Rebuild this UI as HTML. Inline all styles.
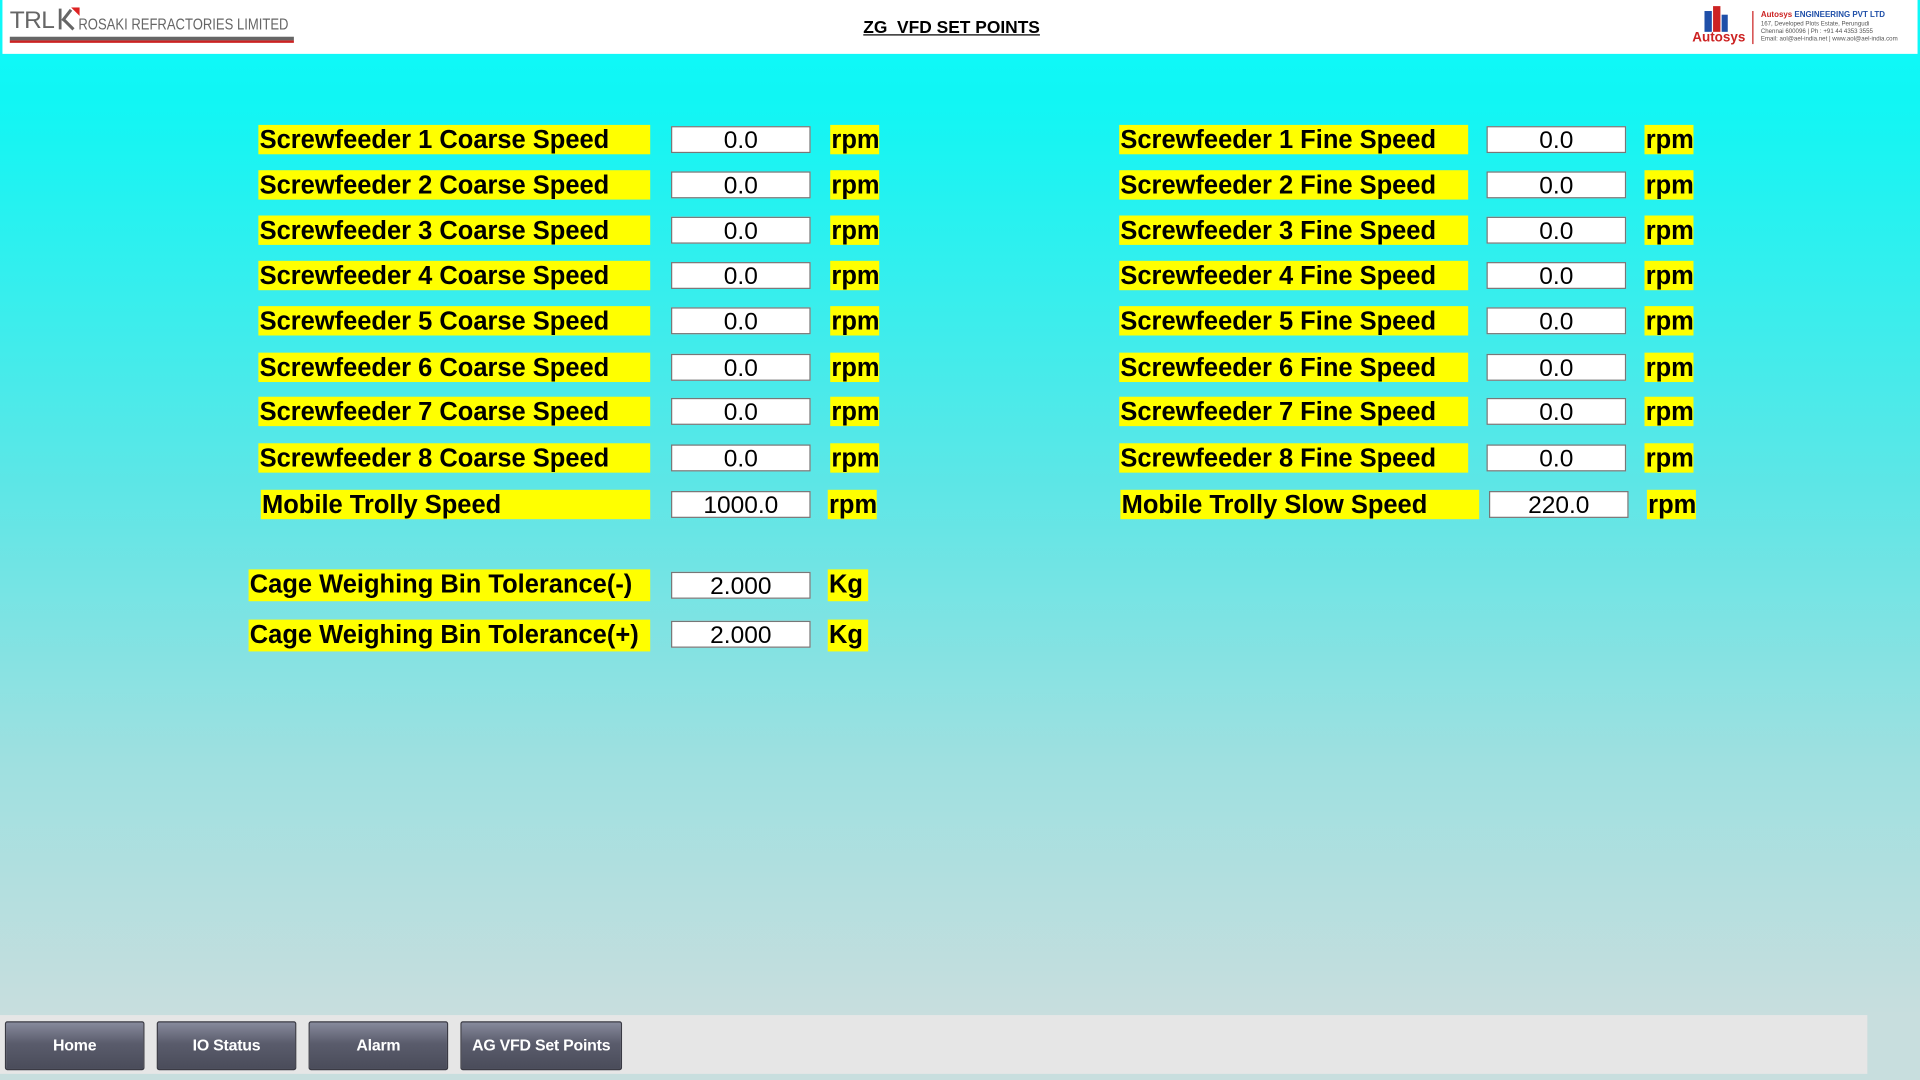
<!DOCTYPE html>
<html><head><meta charset="utf-8"><style>
html,body{margin:0;padding:0;width:1920px;height:1080px;overflow:hidden}
#w{position:absolute;left:0;top:0;width:1568px;height:882px;transform:scale(1.22449);transform-origin:0 0;
background:linear-gradient(#0ff8f8 45px,#10f6f4 80px,#5ee6e6 400px,#9ee0e0 620px,#c8dede 830px);font-family:"Liberation Sans",Arial,sans-serif}
.a{position:absolute}
.hdr{left:2px;top:0;width:1564px;height:44px;background:#fff}
.l{position:absolute;background:#ff0;font-weight:bold;font-size:20.8px;color:#000;height:24px;line-height:25px;white-space:nowrap;padding-left:1px;box-sizing:border-box}
.i{position:absolute;background:#fff;border:1px solid #777;height:22px;box-sizing:border-box;text-align:center;font-size:20px;line-height:22px;color:#000}
.b{position:absolute;top:834px;height:40px;background:linear-gradient(#878a9c,#5a5c6c 45%,#4a4c5a);border:1px solid #3a3a44;border-radius:2px;box-sizing:border-box;color:#fff;font-weight:bold;font-size:13px;text-align:center;line-height:38px;letter-spacing:-0.2px}
</style></head><body><div id="w">
<div class="a hdr"></div>
<div class="a" style="left:8px;top:6px;font-size:20px;color:#666;letter-spacing:-0.5px">TRL</div>
<svg class="a" style="left:48px;top:6px" width="18" height="19" viewBox="0 0 18 19"><path d="M1 1V18M3 11L10 2M4 10L12 18" stroke="#666" stroke-width="2.5" fill="none"/><path d="M10 0H17V7Z" fill="#d22"/></svg>
<div class="a" style="left:64px;top:12px;font-size:13px;color:#666;white-space:nowrap;transform:scaleX(0.82);transform-origin:0 0">ROSAKI REFRACTORIES LIMITED</div>
<div class="a" style="left:8px;top:30px;width:232px;height:3px;background:#666"></div>
<div class="a" style="left:8px;top:33px;width:232px;height:2px;background:#c22"></div>
<div class="a" style="left:705px;top:15px;font-size:14.2px;font-weight:bold;text-decoration:underline">ZG&nbsp; VFD SET POINTS</div>
<div class="a" style="left:1392px;top:9px;width:6px;height:17px;background:#1f4fa8"></div>
<div class="a" style="left:1399px;top:5px;width:6px;height:21px;background:#c22"></div>
<div class="a" style="left:1406px;top:12px;width:5px;height:14px;background:#1f4fa8"></div>
<div class="a" style="left:1382px;top:25px;font-size:11px;font-weight:bold;color:#c22">Autosys</div>
<div class="a" style="left:1431px;top:9px;width:1px;height:27px;background:#c22"></div>
<div class="a" style="left:1438px;top:9px;font-size:6.5px;font-weight:bold;color:#c22;white-space:nowrap">Autosys <span style="color:#1f4fa8">ENGINEERING PVT LTD</span></div>
<div class="a" style="left:1438px;top:17px;font-size:5px;color:#555;line-height:6px;white-space:nowrap">167, Developed Plots Estate, Perungudi<br>Chennai 600096 | Ph : +91 44 4353 3555<br>Email: aol@ael-india.net | www.aol@ael-india.com</div>

<div class="l" style="left:211px;top:102px;width:320px">Screwfeeder 1 Coarse Speed</div>
<div class="l" style="left:211px;top:139px;width:320px">Screwfeeder 2 Coarse Speed</div>
<div class="l" style="left:211px;top:176px;width:320px">Screwfeeder 3 Coarse Speed</div>
<div class="l" style="left:211px;top:213px;width:320px">Screwfeeder 4 Coarse Speed</div>
<div class="l" style="left:211px;top:250px;width:320px">Screwfeeder 5 Coarse Speed</div>
<div class="l" style="left:211px;top:288px;width:320px">Screwfeeder 6 Coarse Speed</div>
<div class="l" style="left:211px;top:324px;width:320px">Screwfeeder 7 Coarse Speed</div>
<div class="l" style="left:211px;top:362px;width:320px">Screwfeeder 8 Coarse Speed</div>
<div class="l" style="left:213px;top:400px;width:318px">Mobile Trolly Speed</div>
<div class="l" style="left:203px;top:465px;width:328px;height:26px;line-height:26px">Cage Weighing Bin Tolerance(-)</div>
<div class="l" style="left:203px;top:506px;width:328px;height:26px;line-height:26px">Cage Weighing Bin Tolerance(+)</div>

<div class="i" style="left:548px;top:103px;width:114px">0.0</div>
<div class="i" style="left:548px;top:140px;width:114px">0.0</div>
<div class="i" style="left:548px;top:177px;width:114px">0.0</div>
<div class="i" style="left:548px;top:214px;width:114px">0.0</div>
<div class="i" style="left:548px;top:251px;width:114px">0.0</div>
<div class="i" style="left:548px;top:289px;width:114px">0.0</div>
<div class="i" style="left:548px;top:325px;width:114px">0.0</div>
<div class="i" style="left:548px;top:363px;width:114px">0.0</div>
<div class="i" style="left:548px;top:401px;width:114px">1000.0</div>
<div class="i" style="left:548px;top:467px;width:114px">2.000</div>
<div class="i" style="left:548px;top:507px;width:114px">2.000</div>

<div class="l" style="left:678px;top:102px;width:40px">rpm</div>
<div class="l" style="left:678px;top:139px;width:40px">rpm</div>
<div class="l" style="left:678px;top:176px;width:40px">rpm</div>
<div class="l" style="left:678px;top:213px;width:40px">rpm</div>
<div class="l" style="left:678px;top:250px;width:40px">rpm</div>
<div class="l" style="left:678px;top:288px;width:40px">rpm</div>
<div class="l" style="left:678px;top:324px;width:40px">rpm</div>
<div class="l" style="left:678px;top:362px;width:40px">rpm</div>
<div class="l" style="left:676px;top:400px;width:40px">rpm</div>
<div class="l" style="left:676px;top:465px;width:33px;height:26px;line-height:26px">Kg</div>
<div class="l" style="left:676px;top:506px;width:33px;height:26px;line-height:26px">Kg</div>

<div class="l" style="left:914px;top:102px;width:285px">Screwfeeder 1 Fine Speed</div>
<div class="l" style="left:914px;top:139px;width:285px">Screwfeeder 2 Fine Speed</div>
<div class="l" style="left:914px;top:176px;width:285px">Screwfeeder 3 Fine Speed</div>
<div class="l" style="left:914px;top:213px;width:285px">Screwfeeder 4 Fine Speed</div>
<div class="l" style="left:914px;top:250px;width:285px">Screwfeeder 5 Fine Speed</div>
<div class="l" style="left:914px;top:288px;width:285px">Screwfeeder 6 Fine Speed</div>
<div class="l" style="left:914px;top:324px;width:285px">Screwfeeder 7 Fine Speed</div>
<div class="l" style="left:914px;top:362px;width:285px">Screwfeeder 8 Fine Speed</div>
<div class="l" style="left:915px;top:400px;width:293px">Mobile Trolly Slow Speed</div>

<div class="i" style="left:1214px;top:103px;width:114px">0.0</div>
<div class="i" style="left:1214px;top:140px;width:114px">0.0</div>
<div class="i" style="left:1214px;top:177px;width:114px">0.0</div>
<div class="i" style="left:1214px;top:214px;width:114px">0.0</div>
<div class="i" style="left:1214px;top:251px;width:114px">0.0</div>
<div class="i" style="left:1214px;top:289px;width:114px">0.0</div>
<div class="i" style="left:1214px;top:325px;width:114px">0.0</div>
<div class="i" style="left:1214px;top:363px;width:114px">0.0</div>
<div class="i" style="left:1216px;top:401px;width:114px">220.0</div>

<div class="l" style="left:1343px;top:102px;width:40px">rpm</div>
<div class="l" style="left:1343px;top:139px;width:40px">rpm</div>
<div class="l" style="left:1343px;top:176px;width:40px">rpm</div>
<div class="l" style="left:1343px;top:213px;width:40px">rpm</div>
<div class="l" style="left:1343px;top:250px;width:40px">rpm</div>
<div class="l" style="left:1343px;top:288px;width:40px">rpm</div>
<div class="l" style="left:1343px;top:324px;width:40px">rpm</div>
<div class="l" style="left:1343px;top:362px;width:40px">rpm</div>
<div class="l" style="left:1345px;top:400px;width:40px">rpm</div>

<div class="a" style="left:0;top:829px;width:1525px;height:48px;background:#e6e6e6"></div>
<div class="b" style="left:4px;width:114px">Home</div>
<div class="b" style="left:128px;width:114px">IO Status</div>
<div class="b" style="left:252px;width:114px">Alarm</div>
<div class="b" style="left:376px;width:132px">AG VFD Set Points</div>
</div></body></html>
